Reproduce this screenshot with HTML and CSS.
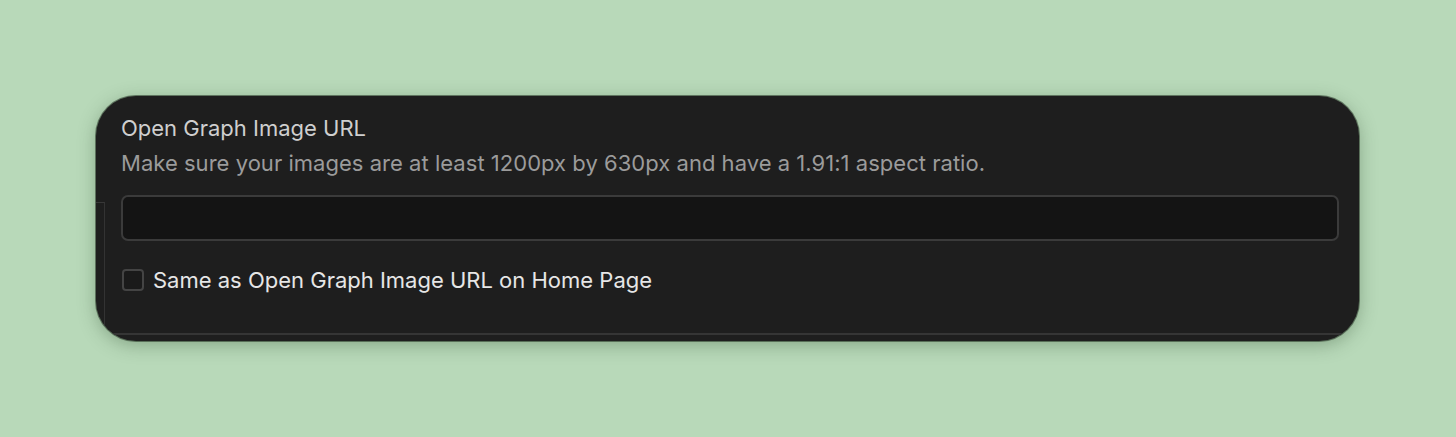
FILE: index.html
```html
<!DOCTYPE html>
<html>
<head>
<meta charset="utf-8">
<link rel="stylesheet" href="styles.css">
</head>
<body>
<div class="card">
  <div class="panel">
    <div class="title">Open Graph Image URL</div>
    <div class="hint">Make sure your images are at least 1200px by 630px and have a 1.91:1 aspect ratio.</div>
    <div class="input"></div>
    <label class="check"><span class="box"></span><span class="label">Same as Open Graph Image URL on Home Page</span></label>
  </div>
</div>
</body>
</html>
```
FILE: styles.css
```css
html, body {
  margin: 0;
  padding: 0;
}
body {
  background: #b8d9b9;
  width: 1456px;
  height: 437px;
  overflow: hidden;
  font-family: Inter, "Noto Sans", sans-serif;
}
.card {
  margin: 96px 0 0 96px;
  width: 1263px;
  height: 245px;
  box-sizing: border-box;
  background: #1e1e1e;
  border-radius: 40px;
  box-shadow: 0 4px 18px rgba(40, 70, 40, 0.35), 0 0 0 1px rgba(20, 30, 20, 0.5);
  overflow: hidden;
  position: relative;
}
.card::before {
  content: "";
  position: absolute;
  left: 0;
  top: 106px;
  width: 8px;
  height: 200px;
  border-top: 1px solid #383838;
  border-right: 1px solid #333333;
}
.panel {
  height: 239px;
  box-sizing: border-box;
  border-bottom: 2px solid #353535;
  padding: 17px 20px 0 25px;
}
.title {
  font-size: 22px;
  line-height: 30px;
  color: #cfcfcf;
}
.hint {
  font-size: 22px;
  line-height: 30px;
  margin-top: 5px;
  color: #9b9b9b;
  letter-spacing: 0.03px;
}
.input {
  margin-top: 17px;
  height: 46px;
  box-sizing: border-box;
  background: #141414;
  border: 2px solid #3b3b3b;
  border-radius: 7px;
}
.check {
  display: flex;
  align-items: center;
  margin-top: 26px;
  gap: 9px;
}
.box {
  width: 22px;
  height: 22px;
  box-sizing: border-box;
  border: 2px solid #444444;
  border-radius: 4px;
  background: #1a1a1a;
  margin-left: 1px;
}
.label {
  font-size: 22px;
  line-height: 26px;
  color: #e6e6e6;
}
```
